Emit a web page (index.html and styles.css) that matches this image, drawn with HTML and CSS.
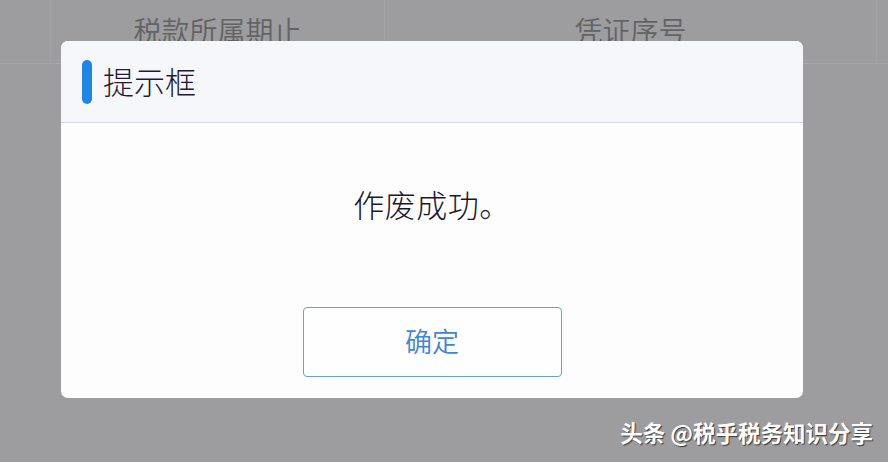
FILE: index.html
```html
<!DOCTYPE html>
<html lang="zh-CN">
<head>
<meta charset="utf-8">
<title>提示框</title>
<link rel="stylesheet" href="styles.css">
</head>
<body>
<div class="page">
  <div class="table-head">
    <div class="cell cell-a"></div>
    <div class="cell cell-b">税款所属期止</div>
    <div class="cell cell-c">凭证序号</div>
  </div>
  <div class="table-body"></div>

  <div class="dialog">
    <div class="dialog-header">
      <span class="bar"></span>
      <span class="title">提示框</span>
    </div>
    <div class="dialog-body">
      <div class="message">作废成功。</div>
      <button class="btn" type="button">确定</button>
    </div>
  </div>

  <div class="watermark">头条 @税乎税务知识分享</div>
</div>
</body>
</html>
```
FILE: styles.css
```css
html, body {
  margin: 0;
  padding: 0;
}
body {
  width: 888px;
  height: 462px;
  overflow: hidden;
  background: #9d9d9f;
  font-family: "Noto Sans CJK SC", "Noto Sans", sans-serif;
}
.page {
  position: relative;
  width: 888px;
  height: 462px;
}
.table-head {
  display: flex;
  height: 63px;
  border-bottom: 1px solid #a6a6a8;
}
.cell {
  display: flex;
  align-items: center;
  justify-content: center;
  color: #636365;
  font-size: 28px;
  font-weight: 350;
  padding-bottom: 3px;
  box-sizing: border-box;
}
.cell-a {
  width: 51px;
  border-right: 1px solid #a3a3a5;
}
.cell-b {
  width: 334px;
  border-right: 1px solid #a3a3a5;
}
.cell-c {
  width: 492px;
  border-right: 1px solid #a3a3a5;
}
.dialog {
  position: absolute;
  left: 61px;
  top: 41px;
  width: 742px;
  height: 357px;
  background: #fdfdfe;
  border-radius: 7px;
  overflow: hidden;
  display: flex;
  flex-direction: column;
}
.dialog-header {
  height: 81px;
  background: #f6f7fb;
  border-bottom: 1px solid #d6dbe4;
  display: flex;
  align-items: center;
  padding-left: 21px;
  gap: 11px;
}
.bar {
  width: 10px;
  height: 44px;
  border-radius: 5px;
  background: #1f86e6;
}
.title {
  font-size: 31px;
  font-weight: 300;
  color: #241a36;
  line-height: 36px;
  padding-bottom: 1px;
}
.dialog-body {
  flex: 1;
  display: flex;
  flex-direction: column;
  align-items: center;
  padding-top: 63px;
}
.message {
  font-size: 31px;
  font-weight: 300;
  line-height: 36px;
  letter-spacing: 0.5px;
  color: #1a172c;
}
.btn {
  margin-top: 85px;
  width: 259px;
  height: 70px;
  box-sizing: border-box;
  background: #fefeff;
  border: 1.5px solid #68a0da;
  border-radius: 4px;
  color: #3f86d5;
  font-family: "Noto Sans CJK SC", "Noto Sans", sans-serif;
  font-size: 27px;
  font-weight: 350;
  padding: 0 0 4px 0;
}
.watermark {
  position: absolute;
  right: 15px;
  top: 416px;
  font-size: 22.5px;
  line-height: 32px;
  font-weight: bold;
  color: #ffffff;
  text-shadow: 1px 1px 1px #3a3a3a;
  white-space: nowrap;
}
```
